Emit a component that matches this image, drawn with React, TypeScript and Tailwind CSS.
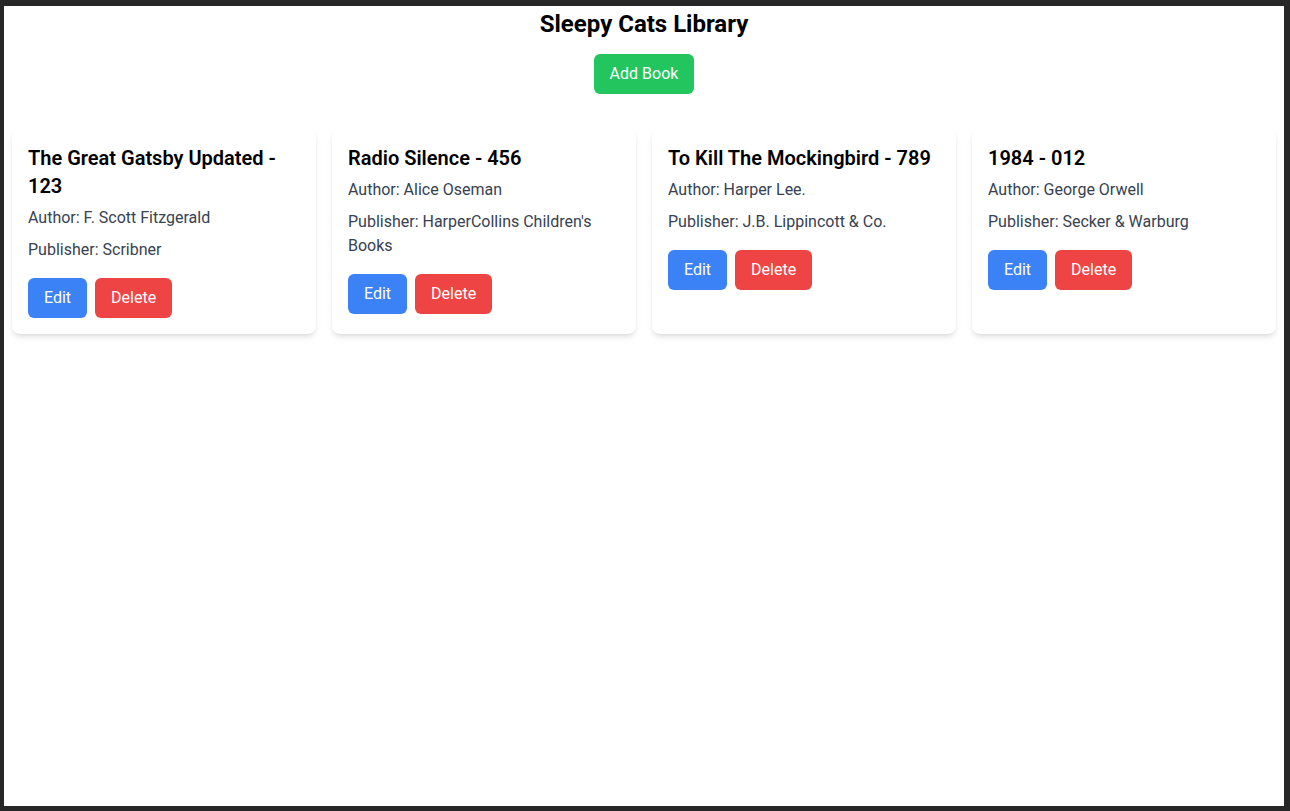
import React from "react";

type Book = { title: string; author: string; publisher: string };

const books: Book[] = [
  { title: "The Great Gatsby Updated - 123", author: "F. Scott Fitzgerald", publisher: "Scribner" },
  { title: "Radio Silence - 456", author: "Alice Oseman", publisher: "HarperCollins Children's Books" },
  { title: "To Kill The Mockingbird - 789", author: "Harper Lee.", publisher: "J.B. Lippincott & Co." },
  { title: "1984 - 012", author: "George Orwell", publisher: "Secker & Warburg" },
];

export default function App() {
  return (
    <div className="w-full h-[811px] bg-[#272727] pt-[6px] pl-[4px]">
      <div className="w-[1280px] h-[800px] bg-white px-2 font-['Roboto',sans-serif]">
        <h1 className="text-2xl font-bold text-center text-black mb-4 pt-[2px] h-[32px]">Sleepy Cats Library</h1>
        <div className="flex justify-center">
          <button className="bg-[#22c55e] text-white px-4 py-2 rounded-md">Add Book</button>
        </div>
        <div className="grid grid-cols-4 gap-4 mt-[34px]">
          {books.map((b) => (
            <div key={b.title} className="bg-white rounded-lg shadow-md p-4">
              <h2 className="text-xl font-semibold text-black mb-1.5">{b.title}</h2>
              <p className="text-[#374151] mb-2">Author: {b.author}</p>
              <p className="text-[#374151]">Publisher: {b.publisher}</p>
              <div className="flex gap-2 mt-4">
                <button className="bg-[#3b82f6] text-white px-4 py-2 rounded-md">Edit</button>
                <button className="bg-[#ef4444] text-white px-4 py-2 rounded-md">Delete</button>
              </div>
            </div>
          ))}
        </div>
      </div>
    </div>
  );
}
